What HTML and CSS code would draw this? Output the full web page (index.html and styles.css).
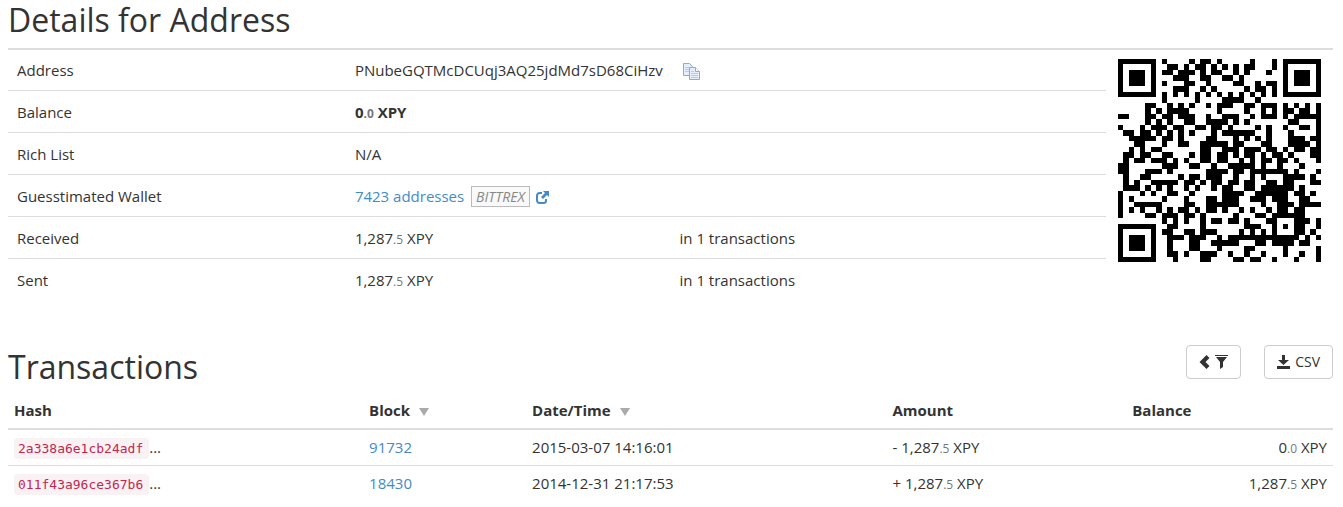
FILE: index.html
```html
<!DOCTYPE html>
<html lang="en">
<head>
<meta charset="utf-8">
<title>Details for Address</title>
<link rel="stylesheet" href="styles.css">
</head>
<body>
<main class="page">
  <h1 class="title">Details for Address</h1>
  <table class="details">
    <colgroup><col class="d-label"><col class="d-value"><col><col class="d-qr"></colgroup>
    <tbody>
      <tr>
        <th scope="row">Address</th>
        <td colspan="2">PNubeGQTMcDCUqj3AQ25jdMd7sD68CiHzv
          <button class="copy" type="button" aria-label="Copy address">
            <svg width="18" height="18" viewBox="0 0 18 18"><g stroke="#93a8d2" fill="#e6eefb"><path d="M.5.5h6l3 3v9h-9z"/><path d="M2 4.500h5M2 6.500h4M2 8.500h4" stroke="#b9caea"/><path d="M6.500 4.500h6l4 4v8h-10z"/><path d="M12.500 4.500v4h4" fill="#fff"/><path d="M8 8.500h3M8 10.500h7M8 12.500h7M8 14.500h7" stroke="#b9caea"/></g></svg>
          </button>
        </td>
        <td class="qr-cell" rowspan="6"><svg class="qr" id="qr" viewBox="0 0 37 37" role="img" aria-label="QR code"></svg></td>
      </tr>
      <tr><th scope="row">Balance</th><td colspan="2"><b>0<small>.0</small> XPY</b></td></tr>
      <tr><th scope="row">Rich List</th><td colspan="2">N/A</td></tr>
      <tr>
        <th scope="row">Guesstimated Wallet</th>
        <td colspan="2"><a href="#wallet">7423 addresses</a> <em class="tag">BITTREX</em>
          <a href="#bittrex" class="ext" aria-label="Open BITTREX"><svg width="13" height="13" viewBox="0 0 13 13"><path d="M6 2H3.500A2.500 2.500 0 0 0 1 4.500v5A2.500 2.500 0 0 0 3.500 12h4A2.500 2.500 0 0 0 10 9.500V8" fill="none" stroke="currentColor" stroke-width="2"/><path d="M7 0h6v6l-2-2-4 4-2-2 4-4z" fill="currentColor"/></svg></a>
        </td>
      </tr>
      <tr><th scope="row">Received</th><td>1,287<small>.5</small> XPY</td><td>in 1 transactions</td></tr>
      <tr><th scope="row">Sent</th><td>1,287<small>.5</small> XPY</td><td>in 1 transactions</td></tr>
    </tbody>
  </table>

  <header class="bar">
    <h2 class="title">Transactions</h2>
    <div class="actions">
      <button class="btn" type="button" aria-label="Show filter">
        <svg width="11" height="14" viewBox="0 0 11 14"><path d="M7.500 0L10.500 3 6.500 7l4 4-3 3L.5 7z" fill="currentColor"/></svg>
        <svg width="13" height="14" viewBox="0 0 13 14"><path d="M0 0h13v1H0zM1 2h11L8 7v5l-3 2V7z" fill="currentColor"/></svg>
      </button>
      <button class="btn" type="button">
        <svg width="13" height="14" viewBox="0 0 13 14"><path d="M5 0h3v5h4L6.500 10 1 5h4zM0 11h13v3H0z" fill="currentColor"/></svg>
        CSV
      </button>
    </div>
  </header>
  <table class="tx">
    <colgroup><col class="t-hash"><col class="t-block"><col class="t-date"><col class="t-amount"><col></colgroup>
    <thead>
      <tr><th scope="col">Hash</th><th scope="col">Block <i class="sort"></i></th><th scope="col">Date/Time <i class="sort"></i></th><th scope="col">Amount</th><th scope="col">Balance</th></tr>
    </thead>
    <tbody>
      <tr><td><a href="#tx1"><code>2a338a6e1cb24adf</code></a>...</td><td><a href="#b91732">91732</a></td><td>2015-03-07 14:16:01</td><td>- 1,287<small>.5</small> XPY</td><td class="num">0<small>.0</small> XPY</td></tr>
      <tr><td><a href="#tx2"><code>011f43a96ce367b6</code></a>...</td><td><a href="#b18430">18430</a></td><td>2014-12-31 21:17:53</td><td>+ 1,287<small>.5</small> XPY</td><td class="num">1,287<small>.5</small> XPY</td></tr>
    </tbody>
  </table>
</main>
<script src="qr.js"></script>
</body>
</html>
```
FILE: styles.css
```css
* { box-sizing: border-box; }
body {
  margin: 0;
  font: 15px/25px "Open Sans", "Noto Sans", sans-serif;
  color: #333;
  background: #fff;
}
.page { padding: 0 10px 0 8px; }
.title { margin: 0; font-size: 32px; line-height: 40px; font-weight: 400; }
h1.title { padding-bottom: 8px; }
table { width: 100%; border-collapse: collapse; table-layout: fixed; }
th { text-align: left; }
a { color: #428bca; text-decoration: none; }
small { font-size: 12px; line-height: 12px; color: #777; }

.details { border-top: 2px solid #ddd; }
.details th, .details td { padding: 9px 9px 7px; font-weight: 400; vertical-align: top; white-space: nowrap; border-top: 1px solid #ddd; }
.details tr:first-child > * { border-top: 0; padding-top: 8px; }
.details b { font-weight: 700; }
.d-label { width: 25.5%; }
.d-value { width: 24.5%; }
.d-qr { width: 227px; }
.details tr:first-child > .qr-cell { padding: 9px 12px 8px; }
.qr { display: block; width: 100%; }
.copy { border: 0; padding: 0; margin-left: 16px; background: none; vertical-align: middle; line-height: 0; }
.tag { display: inline-block; padding: 0 4px; border: 1px solid #bbb; background: #f9f9f9; color: #888; font-size: 14px; line-height: 19px; margin: 0 2px 0 3px; }
.ext svg { vertical-align: -2px; }

.bar { display: flex; justify-content: space-between; align-items: flex-start; padding-top: 45px; }
.bar .title { padding: 2px 0 6px; }
.actions { display: flex; gap: 23px; }
.btn { display: flex; align-items: center; gap: 5px; height: 34px; padding: 0 12px; border: 1px solid #ccc; border-radius: 4px; background: #fff; color: #333; font: 14px/20px "Open Sans", "Noto Sans", sans-serif; }

.tx th, .tx td { padding: 5px 6px; white-space: nowrap; border-bottom: 1px solid #ddd; }
.tx thead th { border-bottom: 2px solid #ddd; }
.tx tbody tr:last-child td { border-bottom: 0; }
.t-hash { width: 26.8%; }
.t-block { width: 12.3%; }
.t-date { width: 27.2%; }
.t-amount { width: 18.1%; }
.sort { display: inline-block; margin-left: 5px; border: 5px solid transparent; border-top: 8px solid #aaa; border-bottom: 0; }
.num { text-align: right; }
code { padding: 3px 6px 3px 4px; border-radius: 4px; background: #f9f2f4; color: #c7254e; font: 13px/13px "DejaVu Sans Mono", monospace; }
```
FILE: qr.js
```js
// Version 5, level H, mask 5 symbol for the address.
(function () {
  var text = "PNubeGQTMcDCUqj3AQ25jdMd7sD68CiHzv";
  var N = 37, grid = [], fixed = [], r, c, i, j;
  for (r = 0; r < N; r++) { grid.push(new Array(N).fill(0)); fixed.push(new Array(N).fill(0)); }
  function set(r, c, v) { if (r >= 0 && c >= 0 && r < N && c < N) { grid[r][c] = v ? 1 : 0; fixed[r][c] = 1; } }
  for (i = 0; i < N; i++) { set(6, i, i % 2 === 0); set(i, 6, i % 2 === 0); }
  function finder(cr, cc) {
    for (var y = -4; y <= 4; y++) for (var x = -4; x <= 4; x++) {
      var d = Math.max(Math.abs(x), Math.abs(y));
      set(cr + y, cc + x, d !== 2 && d !== 4);
    }
  }
  finder(3, 3); finder(3, N - 4); finder(N - 4, 3);
  for (r = -2; r <= 2; r++) for (c = -2; c <= 2; c++) set(30 + r, 30 + c, Math.max(Math.abs(r), Math.abs(c)) !== 1);
  var f = "000001001010101";
  for (i = 0; i < 15; i++) {
    var v = f[i] === "1";
    if (i < 6) set(8, i, v); else if (i === 6) set(8, 7, v); else if (i === 7) set(8, 8, v);
    else if (i === 8) set(7, 8, v); else set(14 - i, 8, v);
    if (i < 7) set(N - 1 - i, 8, v); else set(8, N - 15 + i, v);
  }
  set(N - 8, 8, 1);

  var bits = "0100" + ("0000000" + text.length.toString(2)).slice(-8);
  for (i = 0; i < text.length; i++) bits += ("0000000" + text.charCodeAt(i).toString(2)).slice(-8);
  bits += "0000";
  while (bits.length % 8) bits += "0";
  var data = bits.match(/.{8}/g).map(function (b) { return parseInt(b, 2); });
  for (i = 0; data.length < 46; i++) data.push(i % 2 ? 17 : 236);
  data.length = 46;

  function mul(a, b) { var z = 0; for (; b; b >>= 1) { if (b & 1) z ^= a; a <<= 1; if (a & 256) a ^= 285; } return z; }
  var gen = [1], root = 1;
  for (i = 0; i < 22; i++) {
    var next = gen.concat(0);
    for (j = 0; j < gen.length; j++) next[j + 1] ^= mul(gen[j], root);
    gen = next; root = mul(root, 2);
  }
  function ecc(block) {
    var rem = block.concat(new Array(22).fill(0));
    for (var i = 0; i < block.length; i++) {
      var q = rem[i];
      for (var j = 0; j < gen.length; j++) rem[i + j] ^= mul(gen[j], q);
    }
    return rem.slice(block.length);
  }
  var blocks = [data.slice(0, 11), data.slice(11, 22), data.slice(22, 34), data.slice(34)];
  var checks = blocks.map(ecc), out = [];
  for (i = 0; i < 12; i++) blocks.forEach(function (b) { if (i < b.length) out.push(b[i]); });
  for (i = 0; i < 22; i++) checks.forEach(function (b) { out.push(b[i]); });

  var k = 0, up = true;
  for (var right = N - 1; right > 0; right -= 2) {
    if (right === 6) right = 5;
    for (i = 0; i < N; i++) for (j = 0; j < 2; j++) {
      r = up ? N - 1 - i : i; c = right - j;
      if (fixed[r][c]) continue;
      var bit = k < out.length * 8 ? (out[k >> 3] >> (7 - (k & 7))) & 1 : 0;
      k++;
      if ((r * c) % 2 + (r * c) % 3 === 0) bit ^= 1;
      grid[r][c] = bit;
    }
    up = !up;
  }
  var d = "";
  for (r = 0; r < N; r++) for (c = 0; c < N; c++) if (grid[r][c]) {
    var start = c;
    while (c + 1 < N && grid[r][c + 1]) c++;
    d += "M" + start + " " + r + "H" + (c + 1) + "v1H" + start + "z";
  }
  var p = document.createElementNS("http://www.w3.org/2000/svg", "path");
  p.setAttribute("d", d);
  p.setAttribute("shape-rendering", "crispEdges");
  document.getElementById("qr").appendChild(p);
})();
```
